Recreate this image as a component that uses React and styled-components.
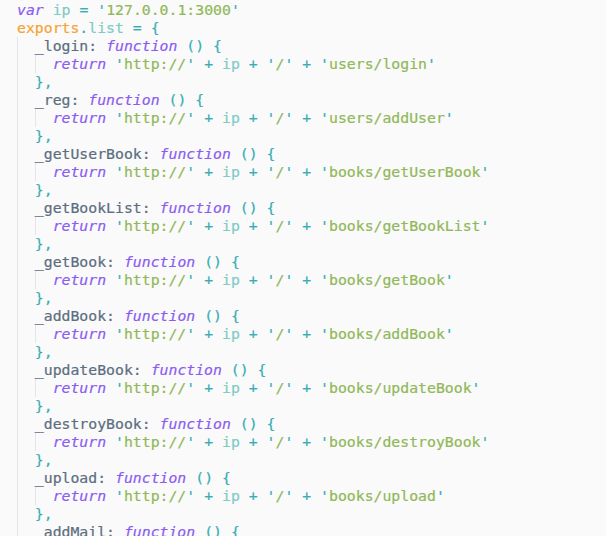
import React from 'react'
import styled, { createGlobalStyle } from 'styled-components'

const GlobalStyle = createGlobalStyle`
  html, body {
    margin: 0;
    padding: 0;
    background: #fafafa;
  }
`

const Editor = styled.div`
  padding: 1px 0 0 17px;
  font-family: "DejaVu Sans Mono", "Liberation Mono", monospace;
  font-size: 14.8px;
  color: #90a4ae;
  -webkit-text-stroke: 0.2px currentColor;
`

const Line = styled.div`
  height: 18px;
  line-height: 18px;
  white-space: pre;
`

const Indent = styled.span`
  display: inline-block;
  width: 2ch;
  height: 18px;
  vertical-align: top;
  box-shadow: inset 1px 0 0 #e3e5e6;
`

const Keyword = styled.span`
  color: #8c5cf0;
  font-style: italic;
`

const Variable = styled.span`
  color: #80cbc4;
`

const Op = styled.span`
  color: #39adb5;
`

const Str = styled.span`
  color: #91b859;
`

const Global = styled.span`
  color: #f6a434;
`

const Key = styled.span`
  color: #5c6e80;
`

const Quoted = ({ children }) => (
  <>
    <Op>'</Op>
    <Str>{children}</Str>
    <Op>'</Op>
  </>
)

const routes = [
  ['_login', 'users/login'],
  ['_reg', 'users/addUser'],
  ['_getUserBook', 'books/getUserBook'],
  ['_getBookList', 'books/getBookList'],
  ['_getBook', 'books/getBook'],
  ['_addBook', 'books/addBook'],
  ['_updateBook', 'books/updateBook'],
  ['_destroyBook', 'books/destroyBook'],
  ['_upload', 'books/upload'],
]

const Method = ({ name, path }) => (
  <>
    <Line>
      <Indent />
      <Key>{name}:</Key> <Keyword>function</Keyword> <Op>()</Op> <Op>{'{'}</Op>
    </Line>
    <Line>
      <Indent />
      <Indent />
      <Keyword>return</Keyword> <Quoted>http://</Quoted> <Op>+</Op> <Variable>ip</Variable>{' '}
      <Op>+</Op> <Quoted>/</Quoted> <Op>+</Op> <Quoted>{path}</Quoted>
    </Line>
    <Line>
      <Indent />
      <Op>{'},'}</Op>
    </Line>
  </>
)

export default function App() {
  return (
    <>
      <GlobalStyle />
      <Editor>
        <Line>
          <Keyword>var</Keyword> <Variable>ip</Variable> <Op>=</Op> <Quoted>127.0.0.1:3000</Quoted>
        </Line>
        <Line>
          <Global>exports</Global>
          <Op>.</Op>
          <Variable>list</Variable> <Op>=</Op> <Op>{'{'}</Op>
        </Line>
        {routes.map(([name, path]) => (
          <Method key={name} name={name} path={path} />
        ))}
        <Line>
          <Indent />
          <Key>_addMail:</Key> <Keyword>function</Keyword> <Op>()</Op> <Op>{'{'}</Op>
        </Line>
      </Editor>
    </>
  )
}
